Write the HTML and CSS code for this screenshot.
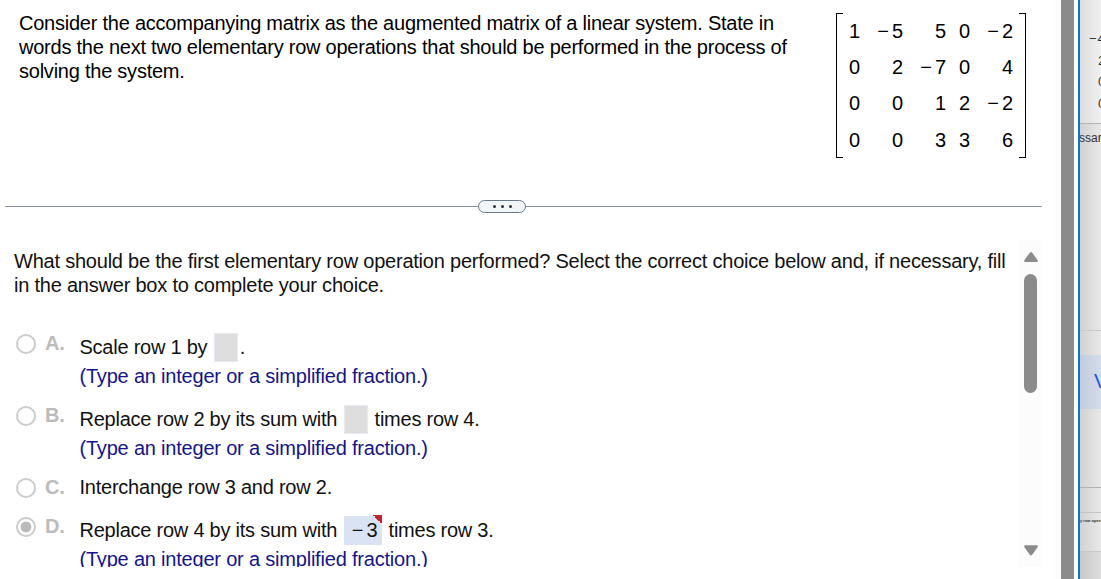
FILE: index.html
```
<!DOCTYPE html>
<html lang="en">
<head>
    <meta charset="UTF-8">
    <meta name="viewport" content="width=device-width, initial-scale=1.0">
    <title>Elementary Row Operations</title>
    <link rel="stylesheet" href="styles.css">
</head>
<body>
    <main class="exercise">
        <section class="question">
            <p class="question-text">
                <span class="line">Consider the accompanying matrix as the augmented matrix of a linear system. State in</span>
                <span class="line">words the next two elementary row operations that should be performed in the process of</span>
                <span class="line">solving the system.</span>
            </p>
            <div class="matrix">
                <span>1</span><span><i>−</i>5</span><span>5</span><span>0</span><span><i>−</i>2</span>
                <span>0</span><span>2</span><span><i>−</i>7</span><span>0</span><span>4</span>
                <span>0</span><span>0</span><span>1</span><span>2</span><span><i>−</i>2</span>
                <span>0</span><span>0</span><span>3</span><span>3</span><span>6</span>
            </div>
        </section>

        <div class="divider">
            <button class="divider-btn" aria-label="Resize"><b></b><b></b><b></b></button>
        </div>

        <section class="answer">
            <div class="answer-body">
                <p class="prompt">
                    <span class="line">What should be the first elementary row operation performed? Select the correct choice below and, if necessary, fill</span>
                    <span class="line">in the answer box to complete your choice.</span>
                </p>

                <div class="option">
                    <span class="radio"></span>
                    <span class="letter">A.</span>
                    <div class="choice">
                        <p class="choice-line">Scale row 1 by <span class="blank"></span><span class="dot">.</span></p>
                        <p class="hint">(Type an integer or a simplified fraction.)</p>
                    </div>
                </div>
                <div class="option">
                    <span class="radio"></span>
                    <span class="letter">B.</span>
                    <div class="choice">
                        <p class="choice-line">Replace row 2 by its sum with <span class="blank"></span><span class="after">times row 4.</span></p>
                        <p class="hint">(Type an integer or a simplified fraction.)</p>
                    </div>
                </div>
                <div class="option plain">
                    <span class="radio"></span>
                    <span class="letter">C.</span>
                    <div class="choice">
                        <p class="choice-line">Interchange row 3 and row 2.</p>
                    </div>
                </div>
                <div class="option">
                    <span class="radio checked"></span>
                    <span class="letter">D.</span>
                    <div class="choice">
                        <p class="choice-line">Replace row 4 by its sum with <span class="filled"><i>−</i>3</span><span class="after">times row 3.</span></p>
                        <p class="hint">(Type an integer or a simplified fraction.)</p>
                    </div>
                </div>
            </div>

            <div class="scrollbar">
                <svg width="14" height="11" viewBox="0 0 14 11"><path d="M5.6.9Q7-.8 8.4.9L13.5 8Q14.4 10 12.8 10H1.2Q-.4 10 .5 8Z" fill="#8b8b8b"/></svg>
                <div class="thumb"></div>
                <svg class="down" width="14" height="11" viewBox="0 0 14 11"><path d="M5.6 9.4Q7 11.1 8.4 9.4L13.5 2.2Q14.4.2 12.8.2H1.2Q-.4.2.5 2.2Z" fill="#8b8b8b"/></svg>
            </div>
        </section>
    </main>

    <div class="window-edge"></div>

    <aside class="preview">
        <div class="preview-matrix">
            <span class="neg">−4</span>
            <span>2</span>
            <span>0</span>
            <span>0</span>
        </div>
        <div class="preview-text">ssary</div>
        <div class="preview-active">V</div>
        <div class="preview-gap"></div>
        <div class="preview-row"></div>
        <div class="preview-small">y row operation</div>
        <div class="preview-end"></div>
    </aside>
</body>
</html>
```
FILE: styles.css
```
* {
    margin: 0;
    padding: 0;
    box-sizing: border-box;
}

body {
    display: flex;
    width: 1101px;
    height: 579px;
    overflow: hidden;
    background: white;
    color: #111;
    font-family: "Liberation Sans", Arial, sans-serif;
    font-size: 20px;
    line-height: 24px;
    letter-spacing: -0.235px;
}

i {
    font-style: normal;
}

/* Main panel */
.exercise {
    width: 1061px;
    flex: none;
    border-right: 6px solid #fcfcfc;
}

.line {
    display: block;
    white-space: nowrap;
}

.question {
    display: flex;
    height: 198px;
    padding: 11px 0 0 19px;
    color: #000;
}

.question-text {
    width: 817px;
}

/* Matrix */
.matrix {
    display: grid;
    grid-template-columns: 11px 43px 43px 24px 43px;
    grid-template-rows: 36px 36px 37px 36px;
    width: 190px;
    height: 145px;
    margin-top: 2px;
    padding-left: 13px;
    line-height: 36px;
    letter-spacing: 0;
    text-align: right;
    background:
        linear-gradient(#000, #000) 0 0 / 7px 1px,
        linear-gradient(#000, #000) 0 100% / 7px 1px,
        linear-gradient(#000, #000) 100% 0 / 7px 1px,
        linear-gradient(#000, #000) 100% 100% / 7px 1px,
        linear-gradient(#000, #000) 0 0 / 1px 100%,
        linear-gradient(#000, #000) 100% 0 / 1px 100%;
    background-repeat: no-repeat;
}

.matrix i {
    margin-right: 3px;
}

/* Divider */
.divider {
    display: flex;
    align-items: center;
    justify-content: center;
    width: 1037px;
    height: 17px;
    margin-left: 5px;
    padding-right: 43px;
    background: linear-gradient(#858ea2, #858ea2) 0 8px / 100% 1px no-repeat;
}

.divider-btn {
    display: flex;
    align-items: center;
    justify-content: center;
    gap: 5px;
    width: 48px;
    height: 13px;
    border: 1px solid #6b7a8a;
    border-radius: 7px;
    background: #f2f5f7;
}

.divider-btn b {
    width: 3px;
    height: 3px;
    border-radius: 50%;
    background: #333;
}

/* Answer area */
.answer {
    display: flex;
    height: 327px;
    margin-top: 25px;
    overflow: hidden;
}

.answer-body {
    width: 1019px;
    flex: none;
    padding-top: 9px;
}

.prompt {
    height: 83px;
    padding-left: 14px;
    letter-spacing: -0.218px;
}

.option {
    display: flex;
    height: 72px;
    padding-left: 16px;
}

.radio {
    width: 20px;
    height: 20px;
    margin: 2px 9px 0 0;
    border: 2px solid #ccc;
    border-radius: 50%;
}

.radio.checked {
    background: radial-gradient(circle, #bbb 5px, transparent 5.8px);
}

.letter {
    width: 34.5px;
    color: #bbb;
    font-weight: bold;
    line-height: 23px;
}

.choice-line {
    display: flex;
    align-items: center;
    height: 30px;
    white-space: pre;
}

.plain {
    height: 39px;
}

.plain .choice-line {
    height: 22px;
}

.hint {
    color: #14148c;
    line-height: 28px;
    letter-spacing: -0.2px;
    white-space: nowrap;
}

.blank {
    width: 24px;
    height: 29px;
    margin-left: 1px;
    border: 1px solid #e6e8f2;
    background: #dedede;
}

.dot {
    margin-left: 2px;
}

.after {
    margin-left: 7px;
}

.filled {
    width: 38px;
    height: 30px;
    margin-left: 1px;
    padding-right: 4px;
    line-height: 30px;
    letter-spacing: 0;
    text-align: right;
    background:
        linear-gradient(45deg, transparent 50%, #c4262e 50%) 100% 0 / 9px 9px no-repeat,
        linear-gradient(#d9e3f3, #d9e3f3) 0 1px / 100% 29px no-repeat;
}

.filled i {
    margin-right: 3px;
}

/* Scrollbar */
.scrollbar {
    display: flex;
    flex-direction: column;
    align-items: center;
    width: 23px;
    padding: 12px 0 11px;
    background: #fcfcfc;
}

.thumb {
    width: 13px;
    height: 119px;
    margin-top: 11px;
    border-radius: 7px;
    background: #8b8b8b;
}

.down {
    margin-top: auto;
}

/* Window behind */
.window-edge {
    width: 19px;
    flex: none;
    background: linear-gradient(90deg, #8b8b8b 13px, white 13px, white 17px, #0078d4 17px);
}

.preview {
    width: 21px;
    flex: none;
    overflow: hidden;
    white-space: nowrap;
    color: #333;
    letter-spacing: 0;
    background: linear-gradient(90deg, #d2d2d2, #e9e9e9);
}

.preview-matrix {
    display: flex;
    flex-direction: column;
    height: 124px;
    padding: 28px 0 0 18px;
    border-bottom: 1px solid #b5b5b5;
    font-size: 13px;
    line-height: 21.7px;
    background: linear-gradient(90deg, #dedede, #f0f0f0);
}

.neg {
    margin-left: -9px;
    letter-spacing: 1px;
}

.preview-text {
    height: 207px;
    padding-top: 6px;
    border-bottom: 1px solid #cacaca;
    font-size: 12px;
    line-height: 16px;
    text-indent: -1px;
}

.preview-active {
    height: 54px;
    margin-top: 24px;
    padding-left: 14px;
    color: #1a56d6;
    line-height: 53px;
    background: linear-gradient(90deg, #c4ccdb, #d3dcec);
}

.preview-gap {
    height: 79px;
    border-bottom: 1px solid #b2b2b2;
}

.preview-row {
    height: 25px;
    border-bottom: 1px solid #c4c4c4;
}

.preview-small {
    height: 39px;
    padding-top: 5px;
    border-bottom: 1px solid #c8c8c8;
    font-size: 4px;
    font-weight: bold;
    line-height: 5px;
}

.preview-end {
    height: 27px;
    background: linear-gradient(90deg, #c8c8c8, #dedede);
}
```
